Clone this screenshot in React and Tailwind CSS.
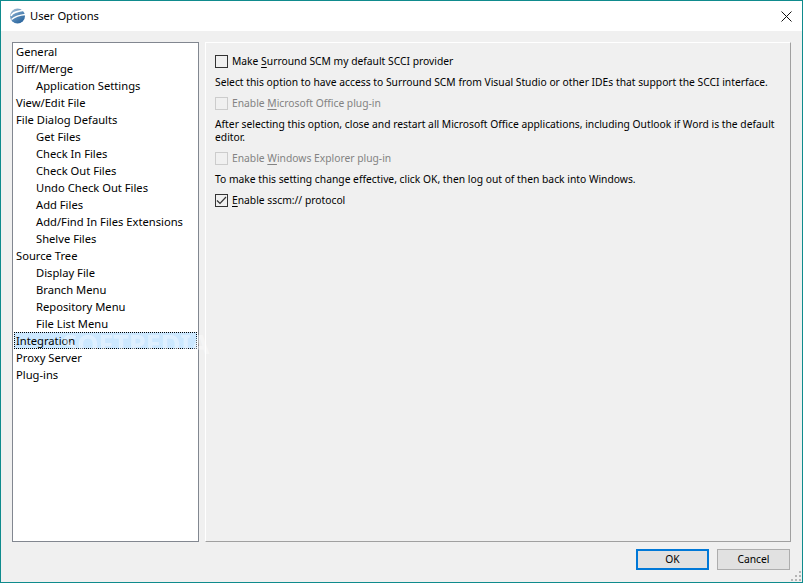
const tree = [
  ["General", 0], ["Diff/Merge", 0], ["Application Settings", 1], ["View/Edit File", 0],
  ["File Dialog Defaults", 0], ["Get Files", 1], ["Check In Files", 1], ["Check Out Files", 1],
  ["Undo Check Out Files", 1], ["Add Files", 1], ["Add/Find In Files Extensions", 1], ["Shelve Files", 1],
  ["Source Tree", 0], ["Display File", 1], ["Branch Menu", 1], ["Repository Menu", 1], ["File List Menu", 1],
  ["Integration", 0], ["Proxy Server", 0], ["Plug-ins", 0],
];

function Logo() {
  return (
    <svg width="17" height="16" viewBox="0 0 17 16" className="shrink-0">
      <defs>
        <linearGradient id="g" x1="0" y1="0" x2="0.7" y2="1">
          <stop offset="0" stopColor="#b5c9dc" />
          <stop offset="0.5" stopColor="#5f8fbb" />
          <stop offset="1" stopColor="#2a659e" />
        </linearGradient>
      </defs>
      <circle cx="8.5" cy="8" r="7.5" fill="url(#g)" />
      <path d="M2 8C3 4 9 3 16.5 2M2.5 11.5C6 8.5 11 7 16.5 6.5" stroke="#fff" strokeWidth="1.5" fill="none" />
    </svg>
  );
}

function Check({ disabled, checked }) {
  return (
    <span className={`w-[13px] h-[13px] shrink-0 border flex items-center justify-center ${disabled ? "border-[#cccccc]" : "border-[#333333]"}`}>
      {checked && (
        <svg width="11" height="11" viewBox="0 0 11 11">
          <path d="M1 5.5L4 8.5L10 2" stroke="#333" strokeWidth="1.2" fill="none" />
        </svg>
      )}
    </span>
  );
}

function Option({ disabled, checked, before, u, after }) {
  return (
    <div className={`flex items-center h-[17px] gap-[4px] ${disabled ? "text-[#838383]" : "text-black"}`}>
      <Check disabled={disabled} checked={checked} />
      <span className="whitespace-nowrap">{before}<span className="underline underline-offset-2">{u}</span>{after}</span>
    </div>
  );
}

export default function App() {
  return (
    <div className="w-[803px] h-[583px] bg-[#f0f0f0] border border-[#0f8b8d] flex flex-col text-[11.2px] leading-[17px] text-black overflow-hidden relative" style={{ fontFamily: '"Noto Sans", sans-serif' }}>
      <div className="h-[30px] bg-white flex items-center shrink-0 pl-[8px] pr-[10px]">
        <Logo />
        <span className="ml-[4px] text-[11.2px] mb-[1px]">User Options</span>
        <svg className="ml-auto" width="11" height="11" viewBox="0 0 11 11">
          <path d="M0.5 0.5L10.5 10.5M10.5 0.5L0.5 10.5" stroke="#111" strokeWidth="1" fill="none" />
        </svg>
      </div>
      <div className="flex gap-[6px] px-[11px] pt-[11px] shrink-0">
        <div className="w-[187px] h-[500px] bg-white border border-[#828790] px-[1px]">
          {tree.map(([label, lvl]) => (
            <div key={label} className={`h-[17px] whitespace-nowrap ${lvl ? "pl-[22px]" : "pl-[2px]"} ${label === "Integration" ? "bg-[#cce8ff] outline-1 outline-dotted outline-black -outline-offset-1" : ""}`}>
              {label}
            </div>
          ))}
        </div>
        <div className="w-[586px] h-[500px] border border-white border-r-[#a0a0a0] border-b-[#a0a0a0] pl-[9px] pt-[10px] flex flex-col text-[10.3px]">
          <Option before="Make " u="S" after="urround SCM my default SCCI provider" />
          <p className="mt-[4px] whitespace-nowrap">Select this option to have access to Surround SCM from Visual Studio or other IDEs that support the SCCI interface.</p>
          <div className="mt-[4px]"><Option disabled before="Enable " u="M" after="icrosoft Office plug-in" /></div>
          <p className="mt-[6px] leading-[13px] pr-[3px]">After selecting this option, close and restart all Microsoft Office applications, including Outlook if Word is the default editor.</p>
          <div className="mt-[6px]"><Option disabled before="Enable " u="W" after="indows Explorer plug-in" /></div>
          <p className="mt-[4px] whitespace-nowrap">To make this setting change effective, click OK, then log out of then back into Windows.</p>
          <div className="mt-[4px]"><Option checked before="" u="E" after="nable sscm:// protocol" /></div>
        </div>
      </div>
      <div className="flex justify-end gap-[8px] pr-[12px] pt-[7px] text-[10.3px]">
        <button className="w-[73px] h-[21px] bg-[#e1e1e1] border-2 border-[#0078d7] flex items-center justify-center">OK</button>
        <button className="w-[73px] h-[21px] bg-[#e1e1e1] border border-[#adadad] flex items-center justify-center">Cancel</button>
      </div>
      <div className="absolute left-[61px] top-[330px] text-[27px] leading-[26px] font-bold text-white/40 pointer-events-none whitespace-nowrap">SOFTPEDIA</div>
      <svg className="absolute right-[0px] bottom-[0px]" width="11" height="11" viewBox="0 0 11 11">
        <g fill="#b5b5b5"><rect x="8" y="0" width="2" height="2"/><rect x="4" y="4" width="2" height="2"/><rect x="8" y="4" width="2" height="2"/><rect x="0" y="8" width="2" height="2"/><rect x="4" y="8" width="2" height="2"/><rect x="8" y="8" width="2" height="2"/></g>
      </svg>
    </div>
  );
}
